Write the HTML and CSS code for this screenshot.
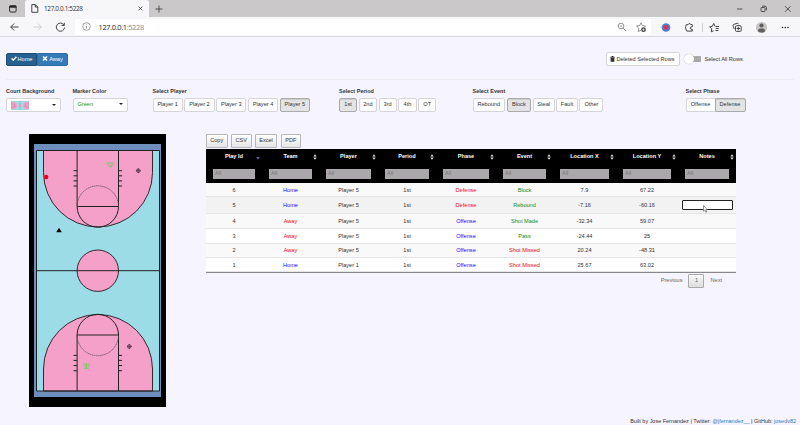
FILE: index.html
```html
<!DOCTYPE html>
<html lang="en">
<head>
<meta charset="utf-8">
<title>127.0.0.1:5228</title>
<link rel="stylesheet" href="styles.css">
</head>
<body>
<header class="browser">
  <div class="tabs">
    <div class="tab-action"><svg width="8" height="8" viewBox="0 0 8 8"><rect x=".6" y=".7" width="6.5" height="6.3" rx="1" fill="none" stroke="#333"/><path d="M.5 1.7h6.8" stroke="#222" stroke-width="2"/></svg></div>
    <div class="tab">
      <svg width="8" height="9" viewBox="0 0 8 9" fill="none" stroke="#333" stroke-width=".9"><path d="M.8.6h3.5l2.5 2.5v5.2h-6zM4.3.6v2.5h2.5"/></svg>
      <span>127.0.0.1:5228</span>
      <svg class="close" width="5" height="5" viewBox="0 0 5 5"><path d="M.6.6l3.8 3.8M4.4.6L.6 4.4" stroke="#333" stroke-width=".8"/></svg>
    </div>
    <svg class="plus" width="8" height="8" viewBox="0 0 8 8"><path d="M4 .5v7M.5 4h7" stroke="#333" stroke-width=".8"/></svg>
    <svg class="window" width="56" height="8" viewBox="0 0 56 8" fill="none" stroke="#333" stroke-width=".8"><path d="M1 4h5.5M49 1.200l5.600 5.600M54.600 1.200L49 6.800"/><rect x="25" y="2.500" width="4" height="4" rx=".7"/><path d="M26 1.200h3q1.400 0 1.400 1.400v2.700"/></svg>
  </div>
  <div class="toolbar">
    <svg class="nav" width="66" height="12" viewBox="0 0 66 12" fill="none" stroke="#333" stroke-width=".9"><path d="M18.500 6H10.800M14.200 2.500L10.700 6l3.500 3.500"/><path d="M33.500 6h7.700M37.800 2.500L41.300 6l-3.500 3.500" stroke="#ccc"/><path d="M64 4.200A4.100 4.100 0 1 0 64.500 6.500M64.300 1.800v2.700h-2.700"/></svg>
    <div class="address">
      <svg width="9" height="9" viewBox="0 0 9 9" fill="none" stroke="#777" stroke-width=".7"><circle cx="4.500" cy="4.500" r="3.800"/><path d="M4.500 4v2.600M4.500 2.300v.8"/></svg>
      <span>127.0.0.1<i>:5228</i></span>
      <svg class="address-tools" width="32" height="12" viewBox="0 0 32 12" fill="none" stroke="#666" stroke-width=".7"><circle cx="6" cy="5" r="2.800"/><path d="M4.700 5h2.600M8 7l2.800 2.800"/><path d="M26 9.300l-2.700 1.200.5-3.300-2.200-2.200 3-.4L26 1.800l1.400 2.800 3 .4-.9 1"/><circle cx="28.500" cy="8.700" r="2.400" fill="#444" stroke="none"/><path d="M28.500 7.300v2.800M27.100 8.700h2.800" stroke="#fff" stroke-width=".6"/></svg>
    </div>
    <svg class="extensions" width="132" height="16" viewBox="0 0 132 16" fill="none" stroke="#333" stroke-width=".9">
      <circle cx="9" cy="8.500" r="4.300" fill="#4d7fd0" stroke="none"/><circle cx="9" cy="8.500" r="2.400" fill="#df3652" stroke="none"/><circle cx="9" cy="8.500" r=".8" fill="#704daa" stroke="none"/>
      <path d="M29.300 5.700h1.800q.7-2.300 2.300-.5l1.900.5v2q-2.300.2-2.100 1.500t2.100 1.200v1.700h-5.500q-1-1-.8-2.200-1-.8-.3-2.200z"/>
      <path d="M45.500 4v9" stroke="#ccc"/>
      <path d="M56.500 11.800l-2.200 1 .4-3-2.100-2 2.800-.5 1.300-2.800 1.300 2.800M58.500 7.500h3.500M58.700 9.500h3M58.500 11.500h3"/>
      <rect x="78.500" y="6.700" width="5.700" height="5.700" rx="1"/><path d="M81.300 7.900v3.300M79.700 9.500H83M77.200 10l-1.200-3.300q-.2-1 .7-1.300l4-1.200 1 .8"/>
      <circle cx="104.500" cy="8.500" r="5.600" fill="#c7c5c4" stroke="none"/><circle cx="104.500" cy="6.500" r="2.100" fill="#62605f" stroke="none"/><path d="M101 12.600q0-3 2.200-3h2.600q2.200 0 2.200 3-3.500 2-7 0z" fill="#62605f" stroke="none"/>
      <g fill="#222" stroke="none"><circle cx="125.500" cy="8.500" r=".8"/><circle cx="128.300" cy="8.500" r=".8"/><circle cx="131" cy="8.500" r=".8"/></g>
    </svg>
  </div>
</header>
<main>
  <section class="actions">
    <div class="team-toggle">
      <button class="selected"><svg width="6" height="5" viewBox="0 0 6 5"><path d="M.6 2.400l1.700 1.700L5.400.7" fill="none" stroke="#fff" stroke-width="1.400"/></svg>Home</button><button><svg width="6" height="5" viewBox="0 0 6 5"><path d="M1 .5l4 4M5 .5l-4 4" stroke="#fff" stroke-width="1.500"/></svg>Away</button>
    </div>
    <button class="btn delete"><svg width="5" height="6" viewBox="0 0 5 6"><path d="M.2.8h1.400V.1h1.800v.7h1.400v.8H.2zM.6 1.800h3.800v3.900H.6z" fill="#333"/></svg>Deleted Selected Rows</button>
    <span class="switch"></span><span class="switch-label">Select All Rows</span>
  </section>
  <section class="filters">
    <div class="field court-field"><label>Court Background</label><button class="btn dropdown"><svg width="18" height="9" viewBox="0 0 18 9"><path fill="#9cdce7" d="M0 0h18v9H0z"/><path fill="#f5a0c8" d="M0 .7h3q3 .8 3 3.800T3 8.300H0zM18 .7h-3q-3 .8-3 3.800t3 3.800h3z"/><circle cx="9" cy="4.500" r="1.500" fill="#f5a0c8"/><path d="M9 0v9M0 3h4v3H0M18 3h-4v3h4" fill="none" stroke="#777" stroke-width=".3"/></svg><b class="caret"></b></button></div>
    <div class="field color-field"><label>Marker Color</label><button class="btn dropdown green">Green<b class="caret"></b></button></div>
    <div class="field player-field"><label>Select Player</label><div class="options"><button class="btn">Player 1</button><button class="btn">Player 2</button><button class="btn">Player 3</button><button class="btn">Player 4</button><button class="btn active">Player 5</button></div></div>
    <div class="field period-field"><label>Select Period</label><div class="options"><button class="btn active">1st</button><button class="btn">2nd</button><button class="btn">3rd</button><button class="btn">4th</button><button class="btn">OT</button></div></div>
    <div class="field event-field"><label>Select Event</label><div class="options"><button class="btn">Rebound</button><button class="btn active">Block</button><button class="btn">Steal</button><button class="btn">Fault</button><button class="btn">Other</button></div></div>
    <div class="field phase-field"><label>Select Phase</label><div class="options joined"><button class="btn">Offense</button><button class="btn active">Defense</button></div></div>
  </section>
  <section class="content">
    <svg class="court" width="137" height="273" viewBox="29 134 137 273">
      <path fill="#000" d="M29 134h137v273H29z"/>
      <path fill="#6e8fbd" d="M34 144h127v253H34z"/>
      <path fill="#9cdce7" d="M36.500 150.500h123v240.500h-123z"/>
      <g fill="#f5a0c8" stroke="#33272e" stroke-width="1">
        <path d="M43.500 150.500v22a54.500 54.500 0 0 0 109 0v-22zM43.500 391v-22a54.500 54.500 0 0 1 109 0v22z"/>
        <circle cx="97.800" cy="270.700" r="20.700"/>
      </g>
      <g fill="none" stroke="#222" stroke-width="1">
        <path d="M36.500 150.500h123V391h-123zM36.500 270.700h123"/>
        <path d="M77.100 150.500v56h41.400v-56M77.100 206.500a20.700 20.700 0 0 0 41.400 0"/>
        <path d="M77.100 391v-56h41.400v56M77.100 335a20.700 20.700 0 0 1 41.400 0"/>
        <path d="M73.500 170.700h3.600M73.500 175.800h3.600M73.500 180.900h3.600M73.500 186h3.600M118.500 170.700h3.600M118.500 175.800h3.600M118.500 180.900h3.600M118.500 186h3.600M73.500 355.400h3.600M73.500 360.400h3.600M73.500 365.500h3.600M73.500 370.700h3.600M118.500 355.400h3.600M118.500 360.400h3.600M118.500 365.500h3.600M118.500 370.700h3.600"/>
        <path d="M77.100 206.500a20.700 20.700 0 0 1 41.400 0M77.100 335a20.700 20.700 0 0 0 41.400 0" stroke="#5d4e5a" stroke-width=".8" stroke-dasharray="1.500 .5"/>
      </g>
      <circle cx="46.200" cy="177" r="2.200" fill="#f00018"/>
      <path d="M59 227.800l2.800 4.400h-5.600z"/>
      <g fill="none" stroke="#522f45" stroke-width=".8"><circle cx="138.300" cy="170.700" r="1.800"/><path d="M135.900 170.700h4.800M138.300 168.300v4.800"/><circle cx="129.300" cy="346.500" r="1.800"/><path d="M126.900 346.500h4.800M129.300 344.100v4.800"/></g>
      <g fill="none" stroke="#7cc86a" stroke-width="1"><path d="M106 163h8M107 165.200h2.500M111 165.200h2.500M109 166.200h3l-1 .9z"/><path d="M83.500 364h6M83.500 366h2.500M87.500 366h2.500M84 368.200h5M86.500 363.500v5"/></g>
    </svg>
    <div class="results">
      <div class="exports"><button class="x1">Copy</button><button class="x2">CSV</button><button class="x3">Excel</button><button class="x4">PDF</button></div>
      <table>
        <colgroup><col class="c56"><col class="c57"><col class="c59"><col class="c58"><col class="c60"><col class="c57"><col class="c63"><col class="c62"><col class="c58"></colgroup>
        <thead>
          <tr class="heads"><th class="desc">Play Id</th><th>Team</th><th>Player</th><th>Period</th><th>Phase</th><th>Event</th><th>Location X</th><th>Location Y</th><th>Notes</th></tr>
          <tr class="search"><td><div>All</div></td><td><div>All</div></td><td><div>All</div></td><td><div>All</div></td><td><div>All</div></td><td><div>All</div></td><td><div>All</div></td><td><div>All</div></td><td><div>All</div></td></tr>
        </thead>
        <tbody>
          <tr class="r1"><td>6</td><td class="blue">Home</td><td>Player 5</td><td>1st</td><td class="red">Defense</td><td class="ok">Block</td><td>7.9</td><td>67.22</td><td></td></tr>
          <tr class="r2"><td>5</td><td class="blue">Home</td><td>Player 5</td><td>1st</td><td class="red">Defense</td><td class="ok">Rebound</td><td>-7.16</td><td>-60.16</td><td><div class="note"><svg class="cursor" width="5" height="8" viewBox="0 0 5 8"><path d="M.5.5v5.700l1.300-1.200 1 2.300.9-.4-1-2.200h1.700z" fill="#fff" stroke="#555" stroke-width=".6"/></svg></div></td></tr>
          <tr class="r3"><td>4</td><td class="red">Away</td><td>Player 5</td><td>1st</td><td class="blue">Offense</td><td class="ok">Shot Made</td><td>-32.34</td><td>59.07</td><td></td></tr>
          <tr class="r4"><td>3</td><td class="red">Away</td><td>Player 5</td><td>1st</td><td class="blue">Offense</td><td class="ok">Pass</td><td>-24.44</td><td>25</td><td></td></tr>
          <tr class="r5"><td>2</td><td class="red">Away</td><td>Player 5</td><td>1st</td><td class="blue">Offense</td><td class="red">Shot Missed</td><td>20.24</td><td>-48.31</td><td></td></tr>
          <tr class="r6"><td>1</td><td class="blue">Home</td><td>Player 1</td><td>1st</td><td class="blue">Offense</td><td class="red">Shot Missed</td><td>25.67</td><td>63.02</td><td></td></tr>
        </tbody>
      </table>
      <nav class="pages"><span>Previous</span><button>1</button><span>Next</span></nav>
    </div>
  </section>
</main>
<footer>Built by Jose Fernandez | Twitter: <a>@jfernandez__</a> | GitHub: <a>josedv82</a></footer>
</body>
</html>
```

FILE: styles.css
```css
* { box-sizing: border-box; }
body {
  margin: 0;
  width: 800px;
  height: 425px;
  display: flex;
  flex-direction: column;
  overflow: hidden;
  background: #f6f4ff;
  color: #333;
  font: 5.6px/8px "Liberation Sans", Arial, sans-serif;
}
svg { display: block; flex: none; }
button { font: inherit; color: inherit; margin: 0; padding: 0; white-space: nowrap; }

/* Browser frame */
.browser { height: 37px; flex: none; background: #f7f6f8; border-bottom: 1px solid #dddbe0; }
.tabs { height: 17px; display: flex; align-items: center; background: #cbc8ca; }
.tab-action { width: 25px; padding-left: 9px; }
.tab { width: 124px; height: 17px; padding: 0 6px; display: flex; align-items: center; background: #f7f6f8; border-radius: 3px 3px 0 0; font: 6.4px/8px "Open Sans", sans-serif; }
.tab span { margin-left: 5px; letter-spacing: -.33px; }
.close { margin-left: auto; }
.plus { margin-left: 6px; }
.window { margin: 0 8px 0 auto; }
.toolbar { height: 19px; display: flex; align-items: center; }
.nav { margin: 0 9px 0 0; }
.address { width: 576px; height: 16px; padding: 0 4px 0 7px; display: flex; align-items: center; background: #fff; border-radius: 2px; font: 7.4px/10px "Open Sans", sans-serif; color: #222; }
.address span { margin-left: 7.500px; letter-spacing: -.34px; }
.address i { font-style: normal; color: #888; }
.address-tools { margin-left: auto; }
.extensions { margin-left: 6px; }

/* Page controls */
main { flex: 1; min-height: 0; }
.actions { height: 43px; margin: 0 6px; padding-top: 15px; display: flex; align-items: flex-start; border-bottom: 1px solid #efecf2; }
.team-toggle { display: flex; margin-top: 1px; }
.team-toggle button { width: 31px; height: 13px; padding-bottom: 2px; border: 1px solid #2e6da4; border-radius: 0 2px 2px 0; background: #337ab7; color: #fff; display: flex; align-items: center; justify-content: center; gap: 1px; }
.team-toggle .selected { border-color: #204d74; border-radius: 2px 0 0 2px; background: #286090; }
.btn { height: 14px; padding: 0 0 2px; border: 1px solid #d6d4d9; border-radius: 2px; background: #fff; display: flex; align-items: center; justify-content: center; }
.actions .delete { width: 74px; margin-left: 537.500px; padding: 0; gap: 1px; }
.delete + .switch { margin-left: 4px; }
.switch { width: 17px; height: 10px; margin-top: 2px; display: flex; align-items: center; background: linear-gradient(#aaa, #aaa) 5px 2px / 12px 6px no-repeat; border-radius: 3px; }
.switch::before { content: ""; width: 10px; height: 10px; border-radius: 50%; background: #fff; box-shadow: 0 0 1px #999; }
.switch-label { margin: 3px 0 0 4px; letter-spacing: -.02px; }
.filters { height: 54px; padding: 7px 6px 0; display: flex; }
.field { flex: none; }
.field label { display: block; height: 11px; font-weight: 700; font-size: 5.5px; white-space: nowrap; }
.court-field { width: 66.5px; }
.color-field { width: 80px; }
.player-field { width: 186.500px; }
.period-field { width: 133.500px; }
.event-field { width: 213px; }
.dropdown { width: 55px; padding: 0 4px; justify-content: space-between; }
.dropdown.green { padding-bottom: 2px; }
.caret { border: 2px solid transparent; border-top: 2px solid #222; border-bottom: 0; }
.green { color: #159415; }
.options { display: flex; gap: 1.500px; }
.player-field .btn { width: 30.300px; }
.period-field .btn { width: 18.200px; }
.period-field .options, .event-field .options { gap: 1.600px; }
.event-field .btn { width: 22px; }
.event-field .btn:first-child { width: 32.500px; }
.event-field .btn:nth-child(2) { width: 24.500px; }
.event-field .btn:nth-child(4) { width: 21.500px; }
.event-field .btn:last-child { width: 24px; }
.joined { gap: 0; }
.options.joined .btn { width: 29px; border-right: 0; border-radius: 2px 0 0 2px; }
.options.joined .active { width: 31px; border-right: 1px solid #aaa; border-radius: 0 2px 2px 0; }
.btn.active { background: #e4e3e5; border-color: #aaa; box-shadow: inset 0 1px 1px #ccc; }

/* Court and play table */
.content { display: flex; padding-left: 29px; }
.results { width: 530px; margin-left: 40px; }
.exports { height: 15px; display: flex; gap: 3.500px; }
.exports button { height: 13.500px; padding-bottom: 2px; border: 1px solid #b8b6ba; border-radius: 1px; background: linear-gradient(#fff, #e5e4e6); }
.x1 { width: 21.500px; } .x2 { width: 20.500px; } .x3 { width: 22px; } .x4 { width: 20.500px; }
table { width: 530px; table-layout: fixed; border-collapse: separate; border-spacing: 0; border-bottom: 1px solid #888; text-align: center; }
td, th { padding: 0; }
.c56 { width: 56px; } .c57 { width: 57px; } .c58 { width: 58px; } .c59 { width: 59px; } .c60 { width: 60px; } .c62 { width: 62px; } .c63 { width: 63px; }
thead { background: #000; color: #fff; }
.heads { height: 15px; }
.heads th { padding-bottom: 2px; background: url("data:image/svg+xml,%3Csvg xmlns='http://www.w3.org/2000/svg' width='4' height='6'%3E%3Cpath fill='%23ddd' d='M.3 2.500L2 .2l1.700 2.300zM.3 3.400h3.400L2 5.700z'/%3E%3C/svg%3E") right 2px center no-repeat; }
.heads .desc { background-image: url("data:image/svg+xml,%3Csvg xmlns='http://www.w3.org/2000/svg' width='4' height='6'%3E%3Cpath fill='%237777d5' d='M.3 3.200h3.400L2 5.500z'/%3E%3C/svg%3E"); }
.search { height: 19px; }
.search td { padding: 1px 7px 0; }
.search div { height: 10px; padding-left: 2px; background: #aaa8aa; color: #777; line-height: 9px; text-align: left; }
tbody td { height: 14px; line-height: 8px; border-bottom: 1px solid #e7e5e8; background: #fff; }
tbody .r1 td, tbody .r3 td, tbody .r5 td { background: #faf9fa; }
tbody .r2 td { height: 17px; background: #f3f2f3; }
tbody .r3 td { height: 15px; }
tbody .r4 td, tbody .r5 td { height: 14.500px; }
.blue { color: #170cff; }
.red { color: #f00825; }
.ok { color: #138a13; }
.note { width: 51px; height: 10px; margin: 0 auto; border: 1px solid #222; border-radius: 1px; background: #fff; position: relative; }
.cursor { position: absolute; left: 20px; top: 4px; }
.pages { height: 16px; padding: 0 14px 1px 0; display: flex; justify-content: flex-end; align-items: center; gap: 6px; color: #666; }
.pages span { padding-bottom: 1px; }
.pages button { width: 16px; height: 14px; padding-bottom: 1px; border: 1px solid #aaa; border-radius: 1px; background: linear-gradient(#fafafa, #ddd); }
footer { height: 8px; flex: none; padding-right: 4px; font-size: 5.470px; text-align: right; }
footer a { color: #337ab7; }
```
